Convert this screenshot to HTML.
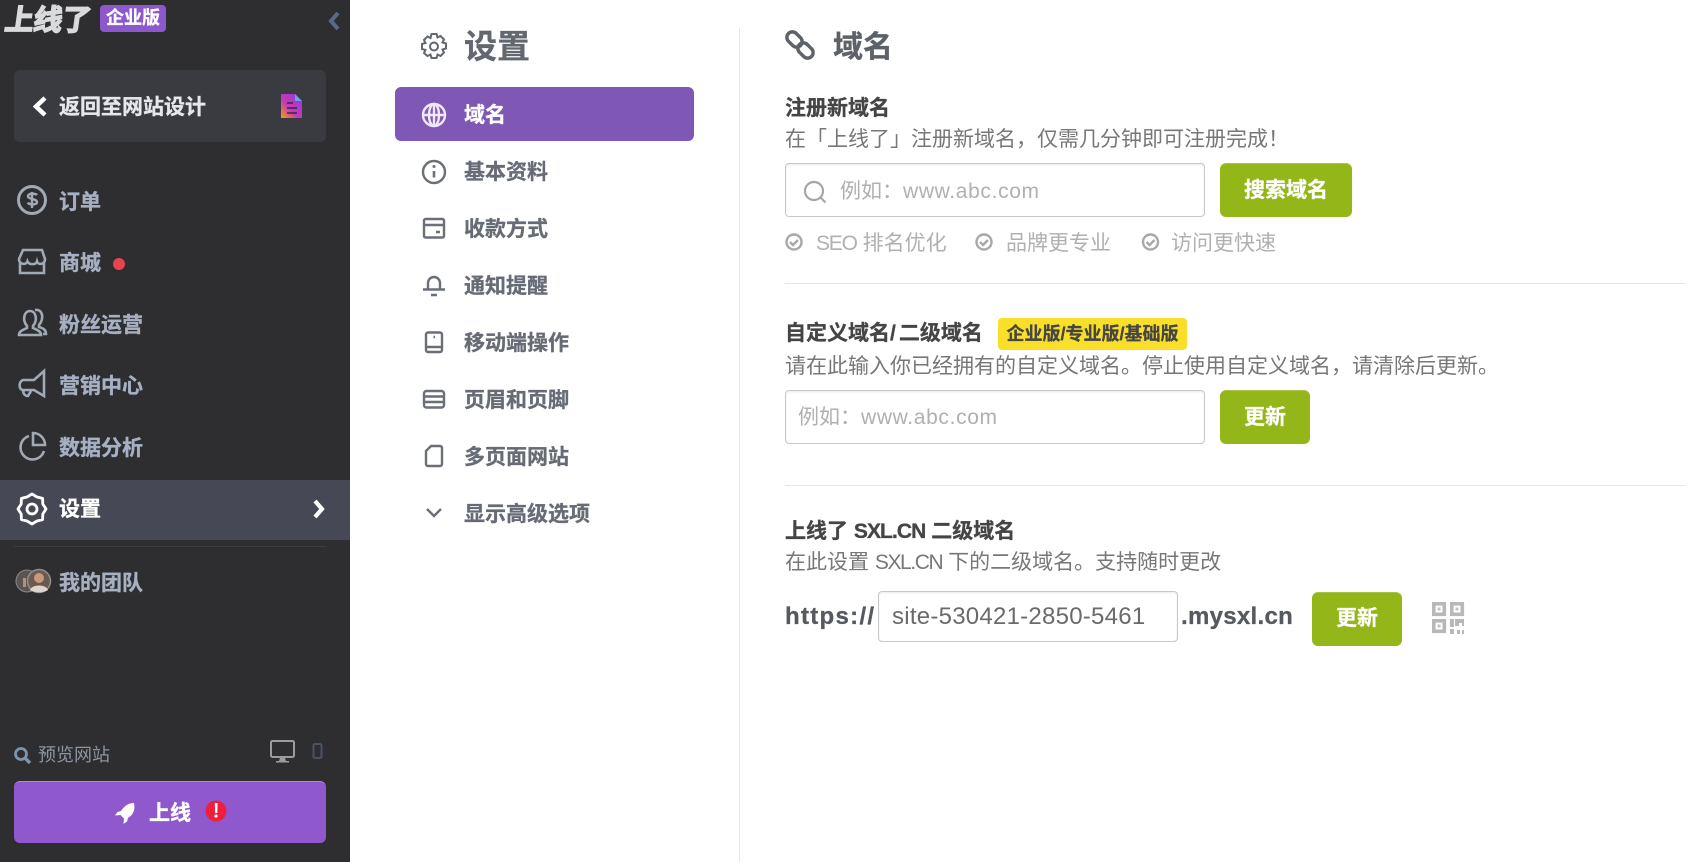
<!DOCTYPE html>
<html><head><meta charset="utf-8"><style>
html,body{margin:0;padding:0;width:1699px;height:862px;overflow:hidden;background:#fff}
body{position:relative;font-family:"Liberation Sans","Noto Sans CJK SC",sans-serif}
.a{position:absolute}
.t{position:absolute;white-space:nowrap;line-height:30px;height:30px}
.b{font-weight:700;-webkit-text-stroke:.3px currentColor}
.m{font-size:21px;font-weight:700;color:#a6b0c2;left:59px;-webkit-text-stroke:.35px currentColor}
.s{font-size:21px;font-weight:700;color:#666b75;left:464px;-webkit-text-stroke:.3px currentColor}
.d{font-size:21px;color:#777;left:785px}
.h{font-size:21px;font-weight:700;color:#454545;left:785px;-webkit-text-stroke:.3px currentColor}
.c{font-size:21px;color:#b0b0b0}
.inp{position:absolute;box-sizing:border-box;background:#fff;border:1px solid #c8c8c8;border-radius:4px;box-shadow:inset 0 1px 2px rgba(0,0,0,.08)}
.btn{position:absolute;background:#93b618;border-radius:6px;color:#fff;font-size:21px;font-weight:700;text-align:center;box-shadow:inset 0 1px 0 rgba(255,255,255,.2);-webkit-text-stroke:.3px #fff}
svg{position:absolute;overflow:visible}
</style></head><body>
<div class="a" style="left:0;top:0;width:350px;height:862px;background:#2e2e30"></div>
<div class="t" style="left:5px;top:6px;font-size:29px;color:#d8dadc;font-weight:700;transform:skewX(-8deg);-webkit-text-stroke:1.5px #d8dadc;letter-spacing:-.5px">上线了</div>
<div class="a b" style="left:100px;top:5px;width:66px;height:27px;background:#8e58cd;border-radius:4px;color:#fff;font-size:18px;line-height:27px;text-align:center">企业版</div>
<svg style="left:0;top:0" width="350" height="60"><path d="M338 13l-7 8 7 8" fill="none" stroke="#586a84" stroke-width="4"/></svg>
<div class="a" style="left:14px;top:70px;width:312px;height:72px;background:#3a3b40;border-radius:6px"></div>
<svg style="left:0;top:0" width="350" height="150"><path d="M45 98l-9 8.500 9 8.500" fill="none" stroke="#fff" stroke-width="4.500"/>
<defs><linearGradient id="g" x1="0" y1="1" x2="1" y2="0"><stop offset="0" stop-color="#f0a010"/><stop offset=".4" stop-color="#c83bb0"/><stop offset="1" stop-color="#8a3be0"/></linearGradient></defs>
<path d="M281 94h14l7 7v17h-21z" fill="url(#g)"/><path d="M295 94l7 7h-7z" fill="#6aa0e8"/><path d="M287 103h6M287 108h10M287 113h10" stroke="#3a2250" stroke-width="1.600"/></svg>
<div class="t b" style="left:59px;top:93px;font-size:21px;color:#e4e7ec">返回至网站设计</div>

<svg style="left:0;top:160px" width="60" height="450" fill="none" stroke="#a1a9b5" stroke-width="2.600">
<circle cx="32" cy="40" r="13.500" stroke-width="3"/><path d="M37 35c-1-1.300-8-2.300-9 .8-.8 3.500 9 2.600 9 6.400-.5 3.300-7.500 2.300-9.500 .6M32 32v16" stroke-width="2.400"/>
<path d="M23 90h19l3 9c0 6-7 6-8 2.500-1 3.500-8 3.500-9.500 0-1 3.500-8.500 3.500-8.500-2.500zM20 102v11h24v-11"/>
<path d="M19 175c0-4 4-5 8-7v-2c-5-6-3-15 3-15s8 9 3 15v2c4 2 8 3 8 7z" /><path d="M35 150c6-1 9 5 6 12l-2 3v2c3 1 7 2 7 7h-3"/>
<path d="M44 211v25l-10-6H23c-4 0-5-8 0-10h11zM24 230c-2 3 1 6 4 6l3-5"/>
<path d="M29 276a12 12 0 1 0 15 15M33 273a12 12 0 0 1 12 12H33z"/>
</svg>
<div class="t m" style="top:188px">订单</div>
<div class="t m" style="top:249px">商城</div>
<div class="a" style="left:113px;top:258px;width:12px;height:12px;border-radius:50%;background:#e8434f"></div>
<div class="t m" style="top:311px">粉丝运营</div>
<div class="t m" style="top:372px">营销中心</div>
<div class="t m" style="top:434px">数据分析</div>
<div class="a" style="left:0;top:480px;width:350px;height:60px;background:#464955"></div>
<svg style="left:0;top:480px" width="350" height="60" fill="none" stroke="#fff" stroke-linejoin="round"><path stroke-width="2.800" d="M46 29L42.800 34 42.600 39.600 37 41 32 44 27 41 21.400 39.600 21.200 34 18 29 21.200 24 21.400 18.400 27 17 32 14 37 17 42.600 18.400 42.800 24z"/><circle cx="32" cy="29" r="5" stroke-width="2.800"/><path d="M315 21l7 8-7 8" stroke-width="4.200" stroke-linejoin="miter"/></svg>
<div class="t b" style="left:59px;top:495px;font-size:21px;color:#fff">设置</div>
<div class="a" style="left:14px;top:546px;width:312px;height:1px;background:#3c3d42"></div>
<svg style="left:14px;top:568px" width="38" height="26"><circle cx="13" cy="13" r="11" fill="#5a5550" stroke="#8a8a8a"/><circle cx="25" cy="13" r="11.500" fill="#6b5a50" stroke="#8f8f8f" stroke-width="1.500"/><circle cx="25" cy="10" r="5" fill="#c9997d"/><path d="M16 22c2-6 16-6 18 0-4 3-14 3-18 0z" fill="#ddd6cc"/><rect x="9" y="10" width="3" height="9" fill="#b89078"/></svg>
<div class="t m" style="top:569px">我的团队</div>

<svg style="left:0;top:740px" width="350" height="30"><circle cx="21" cy="14" r="5.500" fill="none" stroke="#7e94ab" stroke-width="2.800"/><path d="M25 18l5 5" stroke="#7e94ab" stroke-width="3.400"/>
<rect x="271" y="1" width="23" height="16" rx="1.500" fill="none" stroke="#9c9c9c" stroke-width="2"/><path d="M280 18h5l1 3h3v1.500h-13V21h3z" fill="#9c9c9c"/>
<rect x="313.500" y="4" width="8" height="14" rx="1.500" fill="none" stroke="#4a5364" stroke-width="2"/></svg>
<div class="t" style="left:38px;top:740px;font-size:18px;color:#8b94a0">预览网站</div>
<div class="a" style="left:14px;top:781px;width:312px;height:62px;box-sizing:border-box;background:#8f58cd;border-top:1px solid #b286e0;border-radius:6px"></div>
<svg style="left:110px;top:798px" width="120" height="30"><path d="M24 5c-5.500 0-10 3-13 8l-3.500 1-2.500 3.500 5.500-.5 3.500 3.500-.5 5.500 3.500-2.500 1-3.500c4.500-3 7.500-7 6-15z" fill="#fff"/><circle cx="106" cy="13" r="10.500" fill="#ee1f3c"/><path d="M104.800 5h2.800l-.3 10h-2.200z" fill="#fff"/><circle cx="106" cy="18" r="1.600" fill="#fff"/></svg>
<div class="t b" style="left:149px;top:799px;font-size:21px;color:#fff">上线</div>

<svg style="left:421px;top:33px" width="26" height="26" fill="none" stroke="#626770" stroke-width="2"><path d="M10.500 1h5l1 3.500 3-1.500 3.500 3.500-1.500 3 3.500 1v5l-3.500 1 1.500 3-3.500 3.500-3-1.500-1 3.500h-5l-1-3.500-3 1.500L3 20l1.500-3L1 16v-5l3.500-1L3 7l3.500-3.500 3 1.500z"/><circle cx="13" cy="13.500" r="4"/></svg>
<div class="t b" style="left:464px;top:30px;font-size:33px;line-height:34px;height:34px;color:#626770">设置</div>
<div class="a" style="left:395px;top:87px;width:299px;height:54px;background:#7f58b5;border-radius:6px"></div>
<svg style="left:0;top:0" width="740" height="540" fill="none" stroke="#6a6f78" stroke-width="2.400">
<g stroke="#f0e8f8"><circle cx="434" cy="115" r="11"/><ellipse cx="434" cy="115" rx="5" ry="11"/><path d="M423 115h22M434 104v22"/></g>
<circle cx="434" cy="172" r="11"/><path d="M434 171v6.500" stroke-width="2.600"/><circle cx="434" cy="166.500" r="1.500" fill="#6a6f78" stroke="none"/>
<rect x="424" y="219" width="20" height="18.500" rx="1.500"/><path d="M424 225h20M436 232h4"/>
<path d="M423 289.500h22M428 289.500v-6.500a6 6 0 0 1 12 0v6.500M431 295h6"/>
<rect x="426" y="332.500" width="16" height="19.500" rx="2"/><path d="M426 347h16M433.500 337h1.500"/>
<rect x="424" y="391" width="20" height="16.500" rx="2.500"/><path d="M424 396.500h20M424 402h20"/>
<path d="M431 446h9a2 2 0 0 1 2 2v16a2 2 0 0 1-2 2h-12a2 2 0 0 1-2-2v-13z"/>
<path d="M427 509l7 7 7-7"/>
</svg>
<div class="t s" style="left:464px;top:101px;color:#fff">域名</div>
<div class="t s" style="top:158px">基本资料</div>
<div class="t s" style="top:215px">收款方式</div>
<div class="t s" style="top:272px">通知提醒</div>
<div class="t s" style="top:329px">移动端操作</div>
<div class="t s" style="top:386px">页眉和页脚</div>
<div class="t s" style="top:443px">多页面网站</div>
<div class="t s" style="top:500px">显示高级选项</div>
<div class="a" style="left:739px;top:28px;width:1px;height:834px;background:#e6e6e6"></div>

<svg style="left:786px;top:30px" width="32" height="32" fill="none" stroke="#5d6269" stroke-width="3.400"><rect x="0" y="4" width="17" height="11" rx="5.500" transform="rotate(45 8.500 9.500)"/><rect x="11" y="15" width="17" height="11" rx="5.500" transform="rotate(45 19.500 20.500)"/></svg>
<div class="t b" style="left:833px;top:31px;font-size:30px;line-height:34px;height:34px;color:#5d6269">域名</div>
<div class="t h" style="top:94px">注册新域名</div>
<div class="t d" style="top:125px">在「上线了」注册新域名，仅需几分钟即可注册完成！</div>
<div class="inp" style="left:785px;top:163px;width:420px;height:54px"></div>
<svg style="left:802px;top:178px" width="26" height="28" fill="none" stroke="#a6a6a6" stroke-width="2.200"><circle cx="12" cy="13" r="9"/><path d="M18.500 19.500l5 5"/></svg>
<div class="t c" style="left:840px;top:177px">例如：<span style="letter-spacing:.65px">www.abc.com</span></div>
<div class="btn" style="left:1220px;top:163px;width:132px;height:54px;line-height:55px">搜索域名</div>
<svg style="left:785px;top:232px" width="400" height="20" fill="none" stroke="#a8a8a8" stroke-width="2.400"><g><circle cx="9" cy="10" r="7.500"/><path d="M5 10l3 3 5-5"/></g><g transform="translate(190 0)"><circle cx="9" cy="10" r="7.500"/><path d="M5 10l3 3 5-5"/></g><g transform="translate(356.500 0)"><circle cx="9" cy="10" r="7.500"/><path d="M5 10l3 3 5-5"/></g></svg>
<div class="t c" style="left:816px;top:229px"><span style="letter-spacing:-1.2px">SEO</span> 排名优化</div>
<div class="t c" style="left:1006px;top:229px">品牌更专业</div>
<div class="t c" style="left:1171px;top:229px">访问更快速</div>
<div class="a" style="left:785px;top:283px;width:900px;height:1px;background:#e6e6e6"></div>

<div class="t h" style="top:319px">自定义域名<span style="letter-spacing:3px">/</span>二级域名</div>
<div class="a b" style="left:998px;top:318px;width:189px;height:32px;background:#fadf2a;border-radius:4px;color:#454545;font-size:18px;line-height:32px;text-align:center;white-space:nowrap">企业版/专业版/基础版</div>
<div class="t d" style="top:352px">请在此输入你已经拥有的自定义域名。停止使用自定义域名，请清除后更新。</div>
<div class="inp" style="left:785px;top:390px;width:420px;height:54px"></div>
<div class="t c" style="left:798px;top:403px">例如：<span style="letter-spacing:.65px">www.abc.com</span></div>
<div class="btn" style="left:1220px;top:390px;width:90px;height:54px;line-height:55px">更新</div>
<div class="a" style="left:785px;top:485px;width:900px;height:1px;background:#e6e6e6"></div>

<div class="t h" style="top:517px">上线了 <span style="letter-spacing:-.9px">SXL.CN</span> 二级域名</div>
<div class="t d" style="top:548px">在此设置 <span style="letter-spacing:-1.4px">SXL.CN</span> 下的二级域名。支持随时更改</div>
<div class="t b" style="left:785px;top:602px;font-size:24px;color:#555a60;letter-spacing:1.3px">https://</div>
<div class="inp" style="left:878px;top:591px;width:300px;height:51px"></div>
<div class="t" style="left:892px;top:602px;font-size:24px;color:#6a6a6a;letter-spacing:.25px">site-530421-2850-5461</div>
<div class="t b" style="left:1181px;top:602px;font-size:24px;color:#555a60;letter-spacing:.3px">.mysxl.cn</div>
<div class="btn" style="left:1312px;top:592px;width:90px;height:54px;line-height:54px">更新</div>
<svg style="left:1431px;top:602px" width="36" height="34"><g fill="none" stroke="#b8b8b8" stroke-width="3.600"><rect x="2.800" y="1.800" width="10.500" height="10.500"/><rect x="20.800" y="1.800" width="10.500" height="10.500"/><rect x="2.800" y="18.800" width="10.500" height="10.500"/></g><g fill="#c4c4c4"><rect x="6.500" y="5.500" width="3" height="3"/><rect x="24.500" y="5.500" width="3" height="3"/><rect x="6.500" y="22.500" width="3" height="3"/></g><path fill="#b8b8b8" d="M19 17h4v8h-4zM24 17h9v7h-2v-3h-3v3h-4zM19 27h4v5h-4zM26 28h3v4h-3zM31 28h2v4h-2z"/></svg>
</body></html>
